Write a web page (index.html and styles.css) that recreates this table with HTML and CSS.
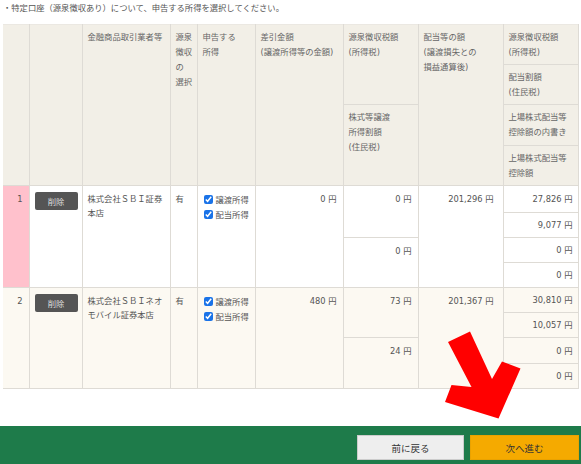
FILE: index.html
```html
<!DOCTYPE html>
<html lang="ja">
<head>
<meta charset="utf-8">
<title>特定口座</title>
<link rel="stylesheet" href="styles.css">
</head>
<body>
<div class="page">
  <p class="intro">・特定口座（源泉徴収あり）について、申告する所得を選択してください。</p>
  <table class="grid">
    <colgroup>
      <col class="c-no"><col class="c-del"><col class="c-name"><col class="c-src"><col class="c-kind"><col class="c-diff"><col class="c-tax"><col class="c-div"><col class="c-sub">
    </colgroup>
    <thead>
      <tr class="h1">
        <th rowspan="4"></th>
        <th rowspan="4"></th>
        <th rowspan="4">金融商品取引業者等</th>
        <th rowspan="4">源泉<br>徴収<br>の<br>選択</th>
        <th rowspan="4">申告する<br>所得</th>
        <th rowspan="4">差引金額<br>(譲渡所得等の金額)</th>
        <th rowspan="2">源泉徴収税額<br>(所得税)</th>
        <th rowspan="4">配当等の額<br>(譲渡損失との<br>損益通算後)</th>
        <th>源泉徴収税額<br>(所得税)</th>
      </tr>
      <tr class="h2"><th>配当割額<br>(住民税)</th></tr>
      <tr class="h3"><th rowspan="2">株式等譲渡<br>所得割額<br>(住民税)</th><th>上場株式配当等<br>控除額の内書き</th></tr>
      <tr class="h4"><th>上場株式配当等<br>控除額</th></tr>
    </thead>
    <tbody class="row-a">
      <tr class="b1">
        <td rowspan="4" class="no">1</td>
        <td rowspan="4"><button class="del" type="button">削除</button></td>
        <td rowspan="4" class="name">株式会社ＳＢＩ証券<br>本店</td>
        <td rowspan="4">有</td>
        <td rowspan="4" class="kinds">
          <label class="chk"><input type="checkbox" checked>譲渡所得</label>
          <label class="chk"><input type="checkbox" checked>配当所得</label>
        </td>
        <td rowspan="4" class="num">0 円</td>
        <td rowspan="2" class="num">0 円</td>
        <td rowspan="4" class="num wide">201,296 円</td>
        <td class="num sub">27,826 円</td>
      </tr>
      <tr class="b2"><td class="num sub">9,077 円</td></tr>
      <tr class="b3"><td rowspan="2" class="num">0 円</td><td class="num sub">0 円</td></tr>
      <tr class="b4"><td class="num sub">0 円</td></tr>
    </tbody>
    <tbody class="row-b">
      <tr class="b1">
        <td rowspan="4" class="no">2</td>
        <td rowspan="4"><button class="del" type="button">削除</button></td>
        <td rowspan="4" class="name">株式会社ＳＢＩネオ<br>モバイル証券本店</td>
        <td rowspan="4">有</td>
        <td rowspan="4" class="kinds">
          <label class="chk"><input type="checkbox" checked>譲渡所得</label>
          <label class="chk"><input type="checkbox" checked>配当所得</label>
        </td>
        <td rowspan="4" class="num">480 円</td>
        <td rowspan="2" class="num">73 円</td>
        <td rowspan="4" class="num wide">201,367 円</td>
        <td class="num sub">30,810 円</td>
      </tr>
      <tr class="b2"><td class="num sub">10,057 円</td></tr>
      <tr class="b3"><td rowspan="2" class="num">24 円</td><td class="num sub">0 円</td></tr>
      <tr class="b4"><td class="num sub">0 円</td></tr>
    </tbody>
  </table>
  <div class="spacer"></div>
  <footer class="bar">
    <button class="btn back" type="button">前に戻る</button>
    <button class="btn next" type="button">次へ進む</button>
  </footer>
  <svg class="annot" width="581" height="464" viewBox="0 0 581 464" aria-hidden="true">
    <polygon points="448,342 470,331.5 492,379 502,361.5 520.5,368.5 498.5,418.5 445,402 451.5,385 471.5,387" fill="#ff0000"/>
  </svg>
</div>
</body>
</html>
```

FILE: styles.css
```css
* { box-sizing: border-box; }

html, body {
  margin: 0;
  padding: 0;
  background: #ffffff;
}

body {
  font-family: "DejaVu Sans", "Noto Sans CJK JP", sans-serif;
  font-size: 8.3px;
  color: #555555;
}

.page {
  position: relative;
  width: 581px;
  height: 464px;
  overflow: hidden;
  display: flex;
  flex-direction: column;
}

.intro {
  margin: 0;
  height: 24px;
  padding: 0 3px;
  line-height: 17px;
  color: #555555;
}

.grid {
  margin-left: 3px;
  width: 575px;
  border-collapse: collapse;
  table-layout: fixed;
}

.c-no { width: 26px; }
.c-del { width: 53px; }
.c-name { width: 88px; }
.c-src { width: 27px; }
.c-kind { width: 58px; }
.c-diff { width: 88px; }
.c-tax { width: 75px; }
.c-div { width: 85px; }
.c-sub { width: 75px; }

.grid th,
.grid td {
  border: 1px solid #dedbd5;
  vertical-align: top;
  text-align: left;
  font-weight: normal;
  white-space: nowrap;
  overflow: visible;
}

.grid th {
  background: #f2efe7;
  color: #666666;
  line-height: 15px;
  padding: 5px 2px 0 5px;
}

.grid thead tr:first-child th { border-top-color: #ebe8e2; }
.grid th:first-child,
.grid td.no { border-left: 0; }

.h1 { height: 40px; }
.h2 { height: 40px; }
.h3 { height: 41px; }
.h4 { height: 40px; }

.grid td {
  line-height: 14px;
  padding: 6px 6px 0 5px;
}

.row-a td { background: #ffffff; }
.row-a td.no { background: #ffc1cc; }
.row-b td { background: #fcf9f2; }

.row-a .b1 { height: 27px; }
.row-a .b2 { height: 25px; }
.row-a .b3 { height: 25px; }
.row-a .b4 { height: 25px; }
.row-b .b1 { height: 25px; }
.row-b .b2 { height: 25px; }
.row-b .b3 { height: 26px; }
.row-b .b4 { height: 25px; }

.grid td.no {
  text-align: right;
  padding-right: 6px;
  padding-top: 6px;
}

.grid td.num {
  text-align: right;
  padding-right: 6px;
}

.grid td.wide { padding-right: 9px; }

.grid td.sub {
  vertical-align: middle;
  padding-top: 0;
  padding-right: 5px;
}

.del {
  display: block;
  width: 43px;
  height: 18px;
  margin: 0;
  padding: 0;
  border: 0;
  border-radius: 2px;
  background: #555555;
  color: #dddddd;
  font-family: "Noto Sans CJK JP", sans-serif;
  font-size: 8.3px;
  line-height: 18px;
  text-align: center;
}

.kinds { padding-top: 4px; }

.chk {
  display: flex;
  align-items: center;
  gap: 3px;
  height: 15px;
  margin-left: 1px;
}

.chk input {
  width: 9px;
  height: 9px;
  margin: 0;
  accent-color: #1a73e8;
}

.spacer { flex: 1; }

.bar {
  height: 38px;
  flex: none;
  background: #1e7b4a;
  display: flex;
  justify-content: flex-end;
  align-items: flex-start;
  gap: 6px;
  padding: 9px 2px 0 0;
}

.btn {
  height: 25px;
  margin: 0;
  padding: 0;
  border: 1px solid #cccccc;
  border-radius: 0;
  font-family: "Noto Sans CJK JP", sans-serif;
  font-size: 9.5px;
  color: #333333;
  text-align: center;
}

.back {
  width: 107px;
  background: #eeeeee;
}

.next {
  width: 109px;
  background: #f5aa00;
  border-color: #eaa200;
}

.annot {
  position: absolute;
  left: 0;
  top: 0;
  pointer-events: none;
}
```
